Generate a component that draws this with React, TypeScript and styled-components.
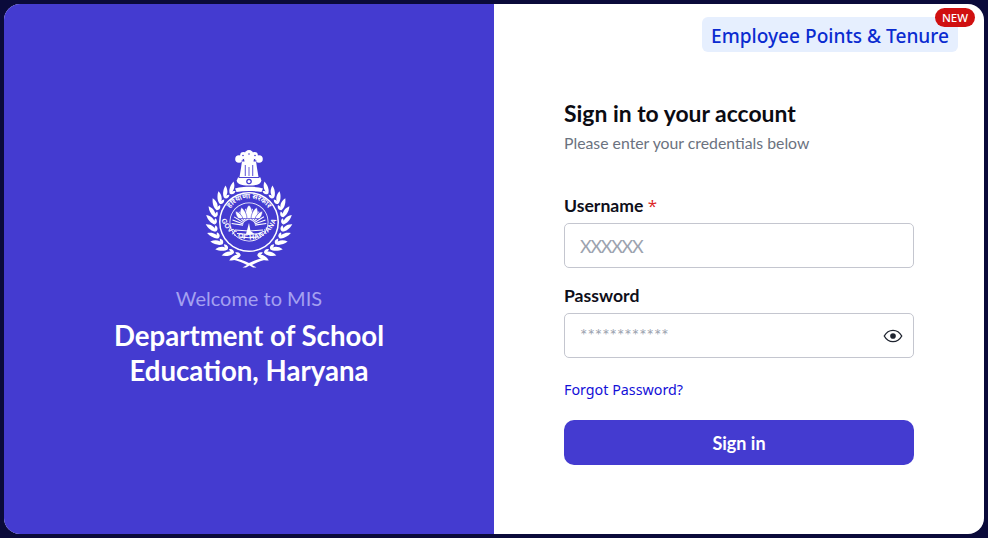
import React from "react";
import styled, { createGlobalStyle } from "styled-components";

const Global = createGlobalStyle`
  html, body { margin: 0; padding: 0; background: #0a0a3a; }
  * { box-sizing: border-box; }
`;

const FONT = `Lato, "Open Sans", "Liberation Sans", sans-serif`;
const BLUE = "#443bd0";

const Page = styled.div`
  width: 988px;
  height: 538px;
  padding: 4px;
  background: #0a0a3a;
  font-family: ${FONT};
`;
const Card = styled.main`
  width: 980px;
  height: 530px;
  display: flex;
  border-radius: 16px;
  overflow: hidden;
  background: #fff;
`;
const Left = styled.section`
  width: 490px;
  background: ${BLUE};
  display: flex;
  flex-direction: column;
  align-items: center;
  padding-top: 146px;
`;
const Welcome = styled.div`
  margin-top: 18px;
  font-size: 20px;
  line-height: 24px;
  color: #a5a1f0;
`;
const Dept = styled.h1`
  margin: 8px 0 0;
  width: 300px;
  text-align: center;
  font-size: 27.6px;
  line-height: 35px;
  font-weight: 700;
  color: #fff;
`;
const Right = styled.section`
  flex: 1;
  position: relative;
  padding: 96px 70px 0;
`;
const PointsLink = styled.a`
  position: absolute;
  top: 13px;
  right: 26px;
  height: 35px;
  padding: 2px 9px 0;
  display: flex;
  align-items: center;
  border-radius: 6px;
  background: #e6effe;
  color: #0a2bd0;
  font-family: "Noto Sans", sans-serif;
  font-size: 19.1px;
  font-weight: 500;
  white-space: nowrap;
`;
const NewBadge = styled.span`
  position: absolute;
  top: -9px;
  right: -17px;
  width: 40px;
  height: 19px;
  border-radius: 10px;
  background: #d01010;
  color: #fff;
  font-family: "Noto Sans", sans-serif;
  font-size: 11.5px;
  line-height: 19px;
  font-weight: 500;
  text-align: center;
`;
const Title = styled.h2`
  margin: 0;
  font-size: 22.9px;
  line-height: 26px;
  font-weight: 700;
  color: #0b0b12;
`;
const Sub = styled.p`
  margin: 7px 0 0;
  font-size: 15.8px;
  line-height: 20px;
  color: #6b7280;
`;
const Form = styled.form`
  margin-top: 41px;
  display: flex;
  flex-direction: column;
`;
const Label = styled.label`
  display: block;
  font-size: 17.6px;
  line-height: 24px;
  font-weight: 700;
  color: #0f0f1a;
`;
const Star = styled.span`
  font-family: "Open Sans", sans-serif;
  font-size: 17px;
  color: #dc2626;
  font-weight: 400;
`;
const InputWrap = styled.div<{ $gap?: number }>`
  position: relative;
  margin-top: 5px;
  margin-bottom: ${(p) => p.$gap ?? 0}px;
`;
const Input = styled.input<{ $masked?: boolean }>`
  display: block;
  width: 350px;
  height: 45px;
  padding: 0 15px;
  border: 1px solid #c4c6cf;
  border-radius: 5px;
  background: #fff;
  outline: none;
  font-family: ${FONT};
  font-size: ${(p) => (p.$masked ? 17.4 : 18)}px;
  letter-spacing: ${(p) => (p.$masked ? 0 : -1.3)}px;
  &::placeholder { color: #9ca3af; opacity: 1; }
`;
const EyeButton = styled.button`
  position: absolute;
  top: 50%;
  right: 11px;
  transform: translateY(-50%);
  padding: 0;
  border: 0;
  background: none;
  display: flex;
  color: #1f2430;
`;
const Forgot = styled.a`
  margin-top: 22px;
  font-family: "Noto Sans", sans-serif;
  font-size: 14.3px;
  line-height: 20px;
  color: #1410d8;
`;
const Submit = styled.button`
  margin-top: 20px;
  width: 350px;
  height: 45px;
  border: 0;
  border-radius: 10px;
  background: ${BLUE};
  color: #fff;
  font-family: ${FONT};
  font-size: 18px;
  font-weight: 700;
`;

const LEAF = "M0 0C2.500 -3.200 8 -3.600 12.500 0C8 2.200 2.500 2.100 0 0z";

function Wreath({ side }: { side: 1 | -1 }) {
  const leaves = [];
  for (let i = 0; i < 12; i++) {
    const deg = 76 - i * 12;
    const a = (deg * Math.PI) / 180;
    const r = 34.5;
    const x = 44 + side * r * Math.cos(a);
    const y = 72 + r * Math.sin(a);
    const t = deg - 90;
    leaves.push(
      <g key={i} transform={`translate(${x} ${y}) scale(${side} 1)`}>
        <path d={LEAF} transform={`rotate(${t + 38})`} />
        <path d={LEAF} transform={`rotate(${t - 14}) scale(0.5 0.7)`} />
      </g>
    );
  }
  return <g fill="#fff">{leaves}</g>;
}

function Emblem() {
  const rays = Array.from({ length: 15 }, (_, i) => -172 + i * 11.7);
  const rad = (d: number) => (d * Math.PI) / 180;
  return (
    <svg width="88" height="118" viewBox="0 0 88 118" aria-label="Emblem of Haryana">
      <defs>
        <path id="arcTop" d="M20.500 72a23.500 23.500 0 0 1 47 0" />
        <path id="arcBottom" d="M15.500 66a29 29 0 0 0 57 0" />
      </defs>
      {/* Lion capital */}
      <g fill="#fff">
        <circle cx="44" cy="4.200" r="4.200" />
        <circle cx="38.500" cy="5.500" r="3.400" />
        <circle cx="49.500" cy="5.500" r="3.400" />
        <circle cx="34" cy="9" r="3.800" />
        <circle cx="54" cy="9" r="3.800" />
        <circle cx="44" cy="10" r="5" />
        <path d="M37 11h14l1 7l1.500 9h-19l1.500 -9z" />
        <path d="M33 27.500h22.500l.8 3c-.5 3.500 -3.800 5 -12.300 5s-11.800 -1.500 -12.300 -5z" />
      </g>
      <g fill={BLUE}>
        <circle cx="38" cy="5.500" r=".8" />
        <circle cx="44" cy="4" r=".8" />
        <circle cx="50" cy="5.500" r=".8" />
        <path d="M36.500 10.500h3v.9h-3zM48.500 10.500h3v.9h-3z" />
        <path d="M39.800 15h.9v11h-.9zM47.300 15h.9v11h-.9zM43.600 17h.8v9h-.8z" />
        <rect x="34" y="27" width="20" height=".9" />
        <circle cx="44" cy="31.500" r="2.800" />
      </g>
      <circle cx="44" cy="31.500" r="1.500" fill="#fff" />
      {/* Motto scroll */}
      <path d="M30 38.500l4 -1c6 -1 14 -1 20 0l4 1l-1.500 3.500c-8 -1.200 -17 -1.200 -25 0z" fill="#fff" />
      {/* Seal */}
      <circle cx="44" cy="72" r="30" fill="#fff" />
      <circle cx="44" cy="72" r="28.500" fill={BLUE} />
      <circle cx="44" cy="72" r="19.500" fill="#fff" />
      <circle cx="44" cy="72" r="18.700" fill={BLUE} />
      <text fontFamily="'Noto Sans', sans-serif" fontSize="7" fontWeight="700" fill="#fff">
        <textPath href="#arcTop" startOffset="50%" textAnchor="middle">हरियाणा सरकार</textPath>
      </text>
      <text fontFamily="'Liberation Sans', sans-serif" fontSize="7" fontWeight="700" fill="#fff" letterSpacing="0.2">
        <textPath href="#arcBottom" startOffset="50%" textAnchor="middle">GOVT. OF HARYANA</textPath>
      </text>
      {/* Sun rays */}
      <g stroke="#fff" strokeWidth="1.100">
        {rays.map((d) => (
          <line key={d} x1={44 + 6 * Math.cos(rad(d))} y1={76 + 6 * Math.sin(rad(d))} x2={44 + 17.500 * Math.cos(rad(d))} y2={76 + 17.500 * Math.sin(rad(d))} />
        ))}
      </g>
      {/* Lotus */}
      <g fill="#fff" stroke={BLUE} strokeWidth="0.600">
        <path d="M44 55c3 3 4.500 8 3 13.500h-6c-1.500 -5.500 0 -10.500 3 -13.500z" />
        <path d="M36.500 57.500c3 2 5.500 6.500 5.500 11h-5.500c-2 -3.500 -2 -8 0 -11z" />
        <path d="M51.500 57.500c-3 2 -5.500 6.500 -5.500 11h5.500c2 -3.500 2 -8 0 -11z" />
        <path d="M30.500 61c3.500 1 6.500 4.500 7.500 7.500h-4.500c-2 -2 -3 -4.500 -3 -7.500z" />
        <path d="M57.500 61c-3.500 1 -6.500 4.500 -7.500 7.500h4.500c2 -2 3 -4.500 3 -7.500z" />
      </g>
      <g stroke="#fff" strokeWidth="1" fill="none">
        <path d="M30 80q14 2 28 0M32 83.500q12 2 24 0M35 87q9 1.500 18 0" />
      </g>
      <path d="M41 84l3 -11l1.500 8l4 3z" fill="#fff" />
      {/* Wreath */}
      <Wreath side={1} />
      <Wreath side={-1} />
      <path d="M27 107.500c6 1 12 3 17 5.500c5 -2.500 11 -4.500 17 -5.500l1 2c-5.500 1 -10.500 3 -15 5.500l4.500 2.500h-3.500l-3.500 -2l-3.500 2h-3.500l4.500 -2.500c-4.500 -2.500 -9.500 -4.500 -15 -5.500z" fill="#fff" />
    </svg>
  );
}

function Eye() {
  return (
    <svg width="20" height="20" viewBox="0 0 24 24" fill="none" stroke="currentColor" strokeWidth="1.600">
      <path d="M1.500 12C4 7.500 7.500 5.200 12 5.200S20 7.500 22.500 12C20 16.500 16.500 18.800 12 18.800S4 16.500 1.500 12z" />
      <circle cx="12" cy="12" r="3.400" fill="currentColor" stroke="none" />
    </svg>
  );
}

export default function App() {
  return (
    <Page>
      <Global />
      <Card>
        <Left>
          <Emblem />
          <Welcome>Welcome to MIS</Welcome>
          <Dept>Department of School Education, Haryana</Dept>
        </Left>
        <Right>
          <PointsLink>
            Employee Points &amp; Tenure
            <NewBadge>NEW</NewBadge>
          </PointsLink>
          <Title>Sign in to your account</Title>
          <Sub>Please enter your credentials below</Sub>
          <Form onSubmit={(e) => e.preventDefault()}>
            <Label>
              Username <Star>*</Star>
            </Label>
            <InputWrap $gap={16}>
              <Input placeholder="XXXXXX" />
            </InputWrap>
            <Label>Password</Label>
            <InputWrap>
              <Input $masked placeholder="************" />
              <EyeButton type="button" aria-label="Show password">
                <Eye />
              </EyeButton>
            </InputWrap>
            <Forgot>Forgot Password?</Forgot>
            <Submit type="submit">Sign in</Submit>
          </Form>
        </Right>
      </Card>
    </Page>
  );
}
